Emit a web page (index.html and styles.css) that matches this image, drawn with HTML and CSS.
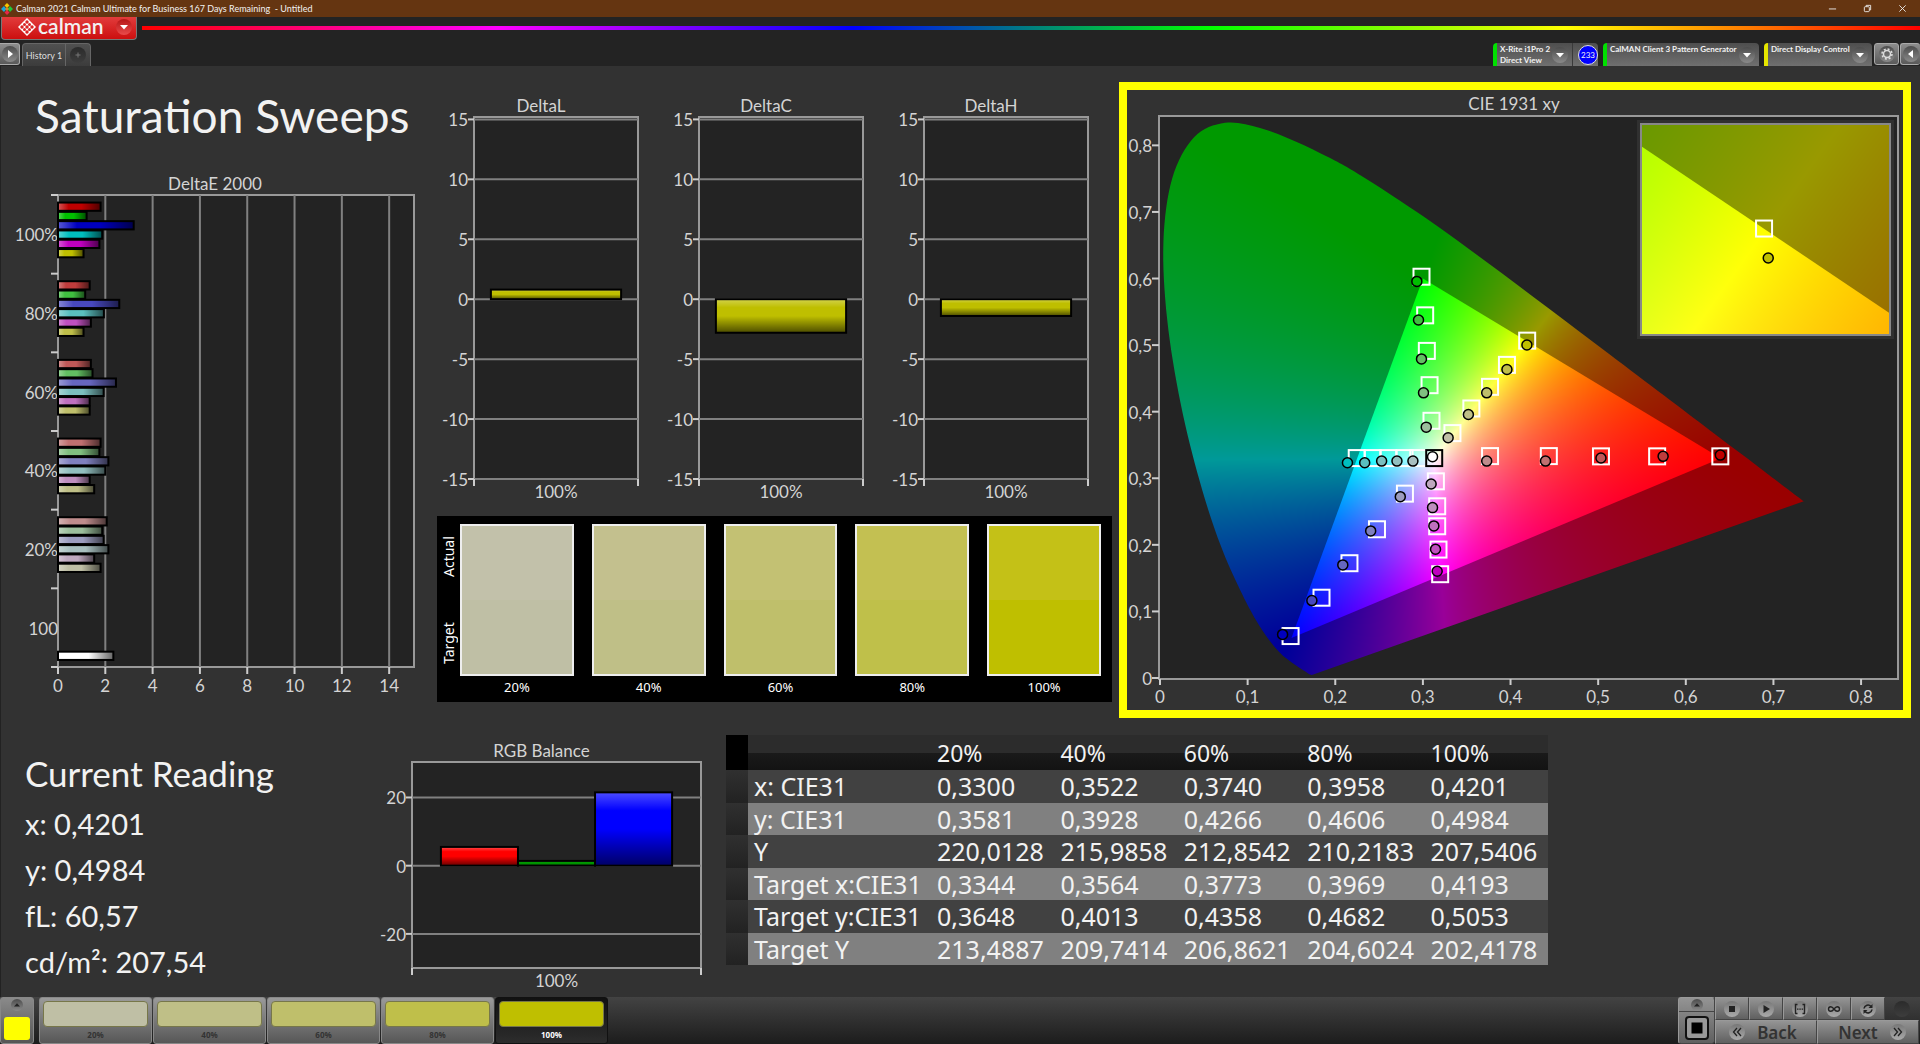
FILE: index.html
```
<!DOCTYPE html>
<html lang="en">
  <head>
    <meta charset="utf-8">
    <title>Calman 2021 - Untitled</title>
    <link rel="stylesheet" href="styles.css">
  </head>
  <body>
    <!-- shared gradients and symbols -->
    <svg class="defs" width="0" height="0" aria-hidden="true">
      <defs>
        <linearGradient id="shade-h" x1="0" y1="0" x2="1" y2="0">
          <stop offset="0" stop-color="#fff" stop-opacity="0.35" />
          <stop offset="0.25" stop-color="#fff" stop-opacity="0" />
          <stop offset="0.55" stop-color="#000" stop-opacity="0" />
          <stop offset="1" stop-color="#000" stop-opacity="0.6" />
        </linearGradient>
        <linearGradient id="shade-v" x1="0" y1="0" x2="0" y2="1">
          <stop offset="0" stop-color="#fff" stop-opacity="0.3" />
          <stop offset="0.25" stop-color="#fff" stop-opacity="0" />
          <stop offset="0.5" stop-color="#000" stop-opacity="0" />
          <stop offset="1" stop-color="#000" stop-opacity="0.6" />
        </linearGradient>
        <symbol id="arrow-down" viewBox="0 0 16 16"><path d="M4 6h8l-4 4.500z" fill="#fff" /></symbol>
        <symbol id="arrow-up" viewBox="0 0 16 16"><path d="M4 10h8L8 5.500z" fill="#222" /></symbol>
      </defs>
    </svg>

    <header class="titlebar">
      <svg class="app-icon" viewBox="0 0 12 12">
        <path d="M6 0l2.500 2.500L6 5 3.500 2.500z" fill="#f7c600" />
        <path d="M3 3l2.500 3L3 9 0 6z" fill="#18a8e0" />
        <path d="M9 3l3 3-3 3-2.500-3z" fill="#1fc83c" />
        <path d="M6 7l2.500 2.500L6 12 3.500 9.500z" fill="#e8264a" />
        <path d="M6 4l2 2-2 2-2-2z" fill="#d8862a" />
      </svg>
      <span class="window-title">Calman 2021 Calman Ultimate for Business 167 Days Remaining &nbsp;- Untitled</span>
      <button class="win-btn" aria-label="Minimize"><svg viewBox="0 0 10 10"><path d="M1 5.500h8" /></svg></button>
      <button class="win-btn" aria-label="Restore"><svg viewBox="0 0 10 10"><rect x="1.500" y="3" width="5.500" height="5.500" rx="1" /><path d="M3.500 3V1.500h5v5H7" /></svg></button>
      <button class="win-btn" aria-label="Close"><svg viewBox="0 0 10 10"><path d="M1.500 1.500l7 7M8.500 1.500l-7 7" /></svg></button>
    </header>

    <div class="brandbar">
      <button class="brand">
        <svg class="brand-mark" viewBox="0 0 18 18">
          <path d="M9 0l9 9-9 9-9-9z" fill="#fff" />
          <g fill="#d92323">
            <circle cx="9" cy="4" r="1.700" /><circle cx="6.500" cy="6.500" r="1.500" /><circle cx="11.500" cy="6.500" r="1.500" />
            <circle cx="4" cy="9" r="1.700" /><circle cx="9" cy="9" r="1.700" /><circle cx="14" cy="9" r="1.700" />
            <circle cx="6.500" cy="11.500" r="1.500" /><circle cx="11.500" cy="11.500" r="1.500" /><circle cx="9" cy="14" r="1.700" />
          </g>
        </svg>
        <span class="brand-name">calman</span>
        <svg class="knob knob-red"><use href="#arrow-down" /></svg>
      </button>
      <div class="rainbow"></div>
    </div>

    <nav class="tabbar">
      <button class="side-btn side-left" aria-label="Expand"><svg class="knob" viewBox="0 0 16 16"><path d="M6 4l5 4-5 4z" fill="#fff" /></svg></button>
      <div class="tabs">
        <button class="tab">History 1</button>
        <button class="tab tab-add" aria-label="Add tab"><svg class="knob knob-dark" viewBox="0 0 16 16"><path d="M8 5.500v5M5.500 8h5" stroke="#777" fill="none" /></svg></button>
      </div>
      <div class="meters">
        <div class="meter meter-green">
          <button class="meter-btn meter-probe"><span>X-Rite i1Pro 2<br>Direct View</span><svg class="knob"><use href="#arrow-down" /></svg></button>
          <span class="count">233</span>
        </div>
        <div class="meter meter-green">
          <button class="meter-btn meter-pattern"><span>CalMAN Client 3 Pattern Generator</span><svg class="knob"><use href="#arrow-down" /></svg></button>
        </div>
        <div class="meter meter-yellow">
          <button class="meter-btn meter-display"><span>Direct Display Control</span><svg class="knob"><use href="#arrow-down" /></svg></button>
        </div>
        <button class="side-btn" aria-label="Settings">
          <svg class="knob" viewBox="0 0 16 16"><circle cx="8" cy="8" r="3.500" fill="none" stroke="#ddd" stroke-width="1.500" /><circle cx="8" cy="8" r="5" fill="none" stroke="#ddd" stroke-width="1.500" stroke-dasharray="2 1.930" /></svg>
        </button>
        <button class="side-btn side-right" aria-label="Collapse"><svg class="knob" viewBox="0 0 16 16"><path d="M10 4L5 8l5 4z" fill="#fff" /></svg></button>
      </div>
    </nav>

    <main class="board">
      <section class="top">
        <div class="sweeps">
          <h1>Saturation Sweeps</h1>
          <figure class="chart chart-de">
            <figcaption>DeltaE 2000</figcaption>
            <svg class="plot" id="deltaE"></svg>
          </figure>
        </div>

        <div class="middle">
          <div class="deltas">
            <figure class="chart chart-delta">
              <figcaption>DeltaL</figcaption>
              <svg class="plot" id="deltaL"></svg>
            </figure>
            <figure class="chart chart-delta">
              <figcaption>DeltaC</figcaption>
              <svg class="plot" id="deltaC"></svg>
            </figure>
            <figure class="chart chart-delta">
              <figcaption>DeltaH</figcaption>
              <svg class="plot" id="deltaH"></svg>
            </figure>
          </div>
          <div class="swatches">
            <div class="swatch-side"><span>Target</span><span>Actual</span></div>
            <div class="swatch"><div class="pair pair-20"></div><span>20%</span></div>
            <div class="swatch"><div class="pair pair-40"></div><span>40%</span></div>
            <div class="swatch"><div class="pair pair-60"></div><span>60%</span></div>
            <div class="swatch"><div class="pair pair-80"></div><span>80%</span></div>
            <div class="swatch"><div class="pair pair-100"></div><span>100%</span></div>
          </div>
        </div>

        <figure class="chart chart-cie">
          <figcaption>CIE 1931 xy</figcaption>
          <div class="cie-plot">
            <canvas id="locus"></canvas>
            <svg class="cie-layer" id="cie"></svg>
            <div class="inset">
              <canvas id="inset-locus"></canvas>
              <svg class="cie-layer" id="cie-inset"></svg>
            </div>
          </div>
        </figure>
      </section>

      <section class="bottom">
        <div class="reading">
          <h2>Current Reading</h2>
          <p>x: 0,4201</p>
          <p>y: 0,4984</p>
          <p>fL: 60,57</p>
          <p>cd/m²: 207,54</p>
        </div>
        <figure class="chart chart-rgb">
          <figcaption>RGB Balance</figcaption>
          <svg class="plot" id="rgb"></svg>
        </figure>
        <div class="data">
          <table>
            <thead>
              <tr><td class="gutter"></td><th class="label"></th><th>20%</th><th>40%</th><th>60%</th><th>80%</th><th>100%</th></tr>
            </thead>
            <tbody>
              <tr><td class="gutter"></td><th class="label">x: CIE31</th><td>0,3300</td><td>0,3522</td><td>0,3740</td><td>0,3958</td><td>0,4201</td></tr>
              <tr><td class="gutter"></td><th class="label">y: CIE31</th><td>0,3581</td><td>0,3928</td><td>0,4266</td><td>0,4606</td><td>0,4984</td></tr>
              <tr><td class="gutter"></td><th class="label">Y</th><td>220,0128</td><td>215,9858</td><td>212,8542</td><td>210,2183</td><td>207,5406</td></tr>
              <tr><td class="gutter"></td><th class="label">Target x:CIE31</th><td>0,3344</td><td>0,3564</td><td>0,3773</td><td>0,3969</td><td>0,4193</td></tr>
              <tr><td class="gutter"></td><th class="label">Target y:CIE31</th><td>0,3648</td><td>0,4013</td><td>0,4358</td><td>0,4682</td><td>0,5053</td></tr>
              <tr><td class="gutter"></td><th class="label">Target Y</th><td>213,4887</td><td>209,7414</td><td>206,8621</td><td>204,6024</td><td>202,4178</td></tr>
            </tbody>
          </table>
        </div>
      </section>
    </main>

    <footer class="dock">
      <button class="current" aria-label="Current color">
        <svg class="knob knob-small"><use href="#arrow-up" /></svg>
        <span class="current-color"></span>
      </button>
      <div class="levels">
        <button class="level"><span class="chip chip-20"></span>20%</button>
        <button class="level"><span class="chip chip-40"></span>40%</button>
        <button class="level"><span class="chip chip-60"></span>60%</button>
        <button class="level"><span class="chip chip-80"></span>80%</button>
        <button class="level level-active"><span class="chip chip-100"></span>100%</button>
      </div>
      <div class="transport">
        <div class="source">
          <button class="source-up" aria-label="Show source"><svg class="knob knob-small"><use href="#arrow-up" /></svg></button>
          <button class="source-stop" aria-label="Stop source"><svg viewBox="0 0 24 24"><rect x="1" y="1" width="22" height="22" rx="3" fill="#999" stroke="#111" stroke-width="2" /><rect x="6.500" y="6.500" width="11" height="11" /></svg></button>
        </div>
        <div class="controls">
          <button aria-label="Stop"><svg class="knob" viewBox="0 0 16 16"><rect x="5" y="5" width="6" height="6" fill="#222" /></svg></button>
          <button aria-label="Play"><svg class="knob" viewBox="0 0 16 16"><path d="M5.500 4l6.500 4-6.500 4z" fill="#222" /></svg></button>
          <button aria-label="Read series"><svg class="knob" viewBox="0 0 16 16"><path d="M5.500 3.500h-2v9h2M10.500 3.500h2v9h-2" fill="none" stroke="#222" stroke-width="1.400" /><path d="M5 7.500h1.500v1.300H5zM7.300 7.500h1.500v1.300H7.300zM9.600 7.500h1.500v1.300H9.600z" fill="#222" /></svg></button>
          <button aria-label="Continuous"><svg class="knob" viewBox="0 0 16 16"><path d="M8 8C6.500 6 5.800 5.700 4.800 5.700a2.300 2.300 0 000 4.600C5.800 10.300 6.500 10 8 8s2.200-2.300 3.200-2.300a2.300 2.300 0 010 4.600C10.200 10.300 9.500 10 8 8z" fill="none" stroke="#222" stroke-width="1.400" /></svg></button>
          <button aria-label="Refresh"><svg class="knob" viewBox="0 0 16 16"><path d="M4 7.500a4 4 0 017-2M12 8.500a4 4 0 01-7 2" fill="none" stroke="#222" stroke-width="1.600" /><path d="M12.500 3v4h-4zM3.500 13V9h4z" fill="#222" /></svg></button>
          <span class="blank"><svg class="knob knob-dark"></svg></span>
          <button class="nav-btn"><svg class="knob" viewBox="0 0 16 16"><path d="M8 4L4.500 8 8 12M12 4L8.500 8l3.500 4" fill="none" stroke="#222" stroke-width="1.300" /></svg>Back</button>
          <button class="nav-btn nav-next">Next<svg class="knob" viewBox="0 0 16 16"><path d="M4 4l3.500 4L4 12M8 4l3.500 4L8 12" fill="none" stroke="#222" stroke-width="1.300" /></svg></button>
        </div>
      </div>
    </footer>

    <script src="charts.js"></script>
  </body>
</html>
```
FILE: styles.css
```
* {
  box-sizing: border-box;
}
html,
body {
  margin: 0;
  height: 100%;
}
body {
  display: flex;
  flex-direction: column;
  min-height: 100vh;
  background-color: #232323;
  color: #f2f2f2;
  font-family: Lato, "Noto Sans", sans-serif;
}
button {
  margin: 0;
  padding: 0;
  border: none;
  background: none;
  color: inherit;
  font: inherit;
}
figure,
h1,
h2,
p {
  margin: 0;
  font-weight: normal;
}
.defs {
  position: absolute;
}

/* round grey button faces */
.knob {
  flex: none;
  width: 16px;
  height: 16px;
  border-radius: 50%;
  background: linear-gradient(#4c4c4c, #8a8a8a);
}
.knob-red {
  background: linear-gradient(#b51616, #ea4a4a);
}
.knob-dark {
  background: linear-gradient(#2b2b2b, #3d3d3d);
}
.knob-small {
  width: 12px;
  height: 12px;
}

/* title bar */
.titlebar {
  display: flex;
  align-items: center;
  height: 17px;
  background-color: #653511;
  font-size: 9px;
}
.app-icon {
  width: 12px;
  height: 12px;
  margin: 0 3px 0 1px;
}
.window-title {
  flex: 1;
}
.win-btn {
  display: flex;
  justify-content: center;
  width: 35px;
}
.win-btn svg {
  width: 9px;
  height: 9px;
  fill: none;
  stroke: #eee;
}

/* brand and rainbow line */
.brandbar {
  display: flex;
  height: 26px;
}
.brand {
  display: flex;
  align-items: center;
  width: 136px;
  height: 23px;
  margin: 0 5px 0 1px;
  padding: 0 4px 2px 16px;
  border: 1px solid #777;
  border-top: none;
  border-radius: 0 0 4px 4px;
  background: linear-gradient(#e23c3c, #cc0f0f);
}
.brand-mark {
  width: 18px;
  height: 18px;
}
.brand-name {
  flex: 1;
  padding: 0 0 3px 2px;
  text-align: left;
  font-size: 21px;
  line-height: 18px;
  font-weight: 600;
}
.rainbow {
  flex: 1;
  height: 4px;
  margin-top: 9px;
  background: linear-gradient(to right, #f00, #f0f 20%, #00f 40%, #0f0 60%, #ff0 80%, #f00);
}

/* tabs and meters */
.tabbar {
  display: flex;
  height: 23px;
  font-size: 9px;
}
.side-btn {
  display: flex;
  align-items: center;
  justify-content: center;
  width: 25px;
  height: 22px;
  border: 1px solid #aaa;
  border-radius: 3px;
  background: linear-gradient(#8d8d8d, #5a5a5a);
}
.side-left {
  width: 20px;
  margin-right: 2px;
  border-left: none;
  border-radius: 0 3px 3px 0;
}
.side-right {
  width: 20px;
  border-right: none;
}
.tabs {
  display: flex;
  flex: 1;
}
.tab {
  display: flex;
  align-items: center;
  justify-content: center;
  width: 44px;
  border: 1px solid #666;
  border-bottom: none;
  border-radius: 4px 0 0 0;
  background: linear-gradient(#505050, #3c3c3c);
  color: #ddd;
}
.tab-add {
  width: 25px;
  border-left: none;
  border-radius: 0 4px 0 0;
}
.meters {
  display: flex;
  gap: 1px;
}
.meter {
  display: flex;
  margin-right: 4px;
  border-left: 4px solid;
  border-radius: 4px 4px 0 0;
  background: linear-gradient(#4e4e4e, #707070);
}
.meter-green {
  border-color: #00e000;
}
.meter-yellow {
  border-color: #e6e600;
  margin-right: 1px;
}
.meter-btn {
  display: flex;
  align-items: center;
  padding: 1px 4px 0 3px;
  text-align: left;
  font-size: 8px;
  line-height: 11px;
  font-weight: bold;
}
.meter-btn span {
  flex: 1;
  align-self: flex-start;
}
.meter-probe {
  width: 76px;
  border-right: 1px solid #3a3a3a;
}
.meter-pattern {
  width: 152px;
}
.meter-display {
  width: 104px;
}
.count {
  align-self: center;
  width: 20px;
  height: 20px;
  margin: 0 0 0 5px;
  border: 1px solid #ddd;
  border-radius: 50%;
  background-color: #00f;
  font-size: 8px;
  line-height: 18px;
  text-align: center;
}

/* board */
.board {
  display: flex;
  flex: 1;
  flex-direction: column;
  min-height: 0;
  border-left: 1px solid #222;
  background-color: #323232;
}
.top {
  display: grid;
  grid-template-columns: 429fr 688fr 802fr;
  flex: 655;
  min-height: 0;
}
.bottom {
  display: grid;
  grid-template-columns: 340fr 385fr 1194fr;
  flex: 276;
  min-height: 0;
}

/* charts */
.chart {
  display: flex;
  flex-direction: column;
  min-width: 0;
  min-height: 0;
  color: #d4d4d4;
  font-size: 17px;
  line-height: 20px;
}
.chart figcaption {
  padding-bottom: 1px;
  text-align: center;
}
.plot {
  flex: 1;
  width: 100%;
  min-height: 0;
  overflow: visible;
  font-size: 17px;
}
.plot text,
.cie-layer text {
  fill: #d4d4d4;
}
.area {
  fill: #232323;
  stroke: #999;
  stroke-width: 2;
}
.grid {
  stroke: #808080;
  stroke-width: 2;
}
.tick {
  stroke: #ccc;
  stroke-width: 2;
}
.bar {
  stroke: #000;
  stroke-width: 2;
}
.sweeps {
  display: flex;
  flex-direction: column;
  min-height: 0;
  padding-top: 20px;
}
.sweeps h1 {
  padding-left: 34px;
  font-size: 46px;
  line-height: 60px;
}
.chart-de {
  flex: 1;
  padding: 28px 16px 54px 57px;
}
.chart-de figcaption {
  padding-right: 42px;
}
.middle {
  display: flex;
  flex-direction: column;
  min-height: 0;
  padding: 30px 6px 19px 7px;
}
.deltas {
  display: grid;
  grid-template-columns: repeat(3, 1fr);
  flex: 1;
  min-height: 0;
}
.chart-delta {
  padding: 0 24px 37px 37px;
}
.chart-delta figcaption {
  padding-right: 30px;
}

/* actual / target swatches */
.swatches {
  display: flex;
  gap: 18px;
  height: 186px;
  padding: 8px 11px 4px 0;
  background-color: #000;
  color: #fff;
  font-family: "Noto Sans", sans-serif;
  font-size: 13px;
}
.swatch-side {
  display: flex;
  justify-content: space-between;
  width: 23px;
  height: 152px;
  margin-right: -18px;
  padding: 12px 0;
  writing-mode: vertical-rl;
  transform: rotate(180deg);
  font-size: 14px;
  line-height: 23px;
}
.swatch {
  flex: 1;
  text-align: center;
  line-height: 23px;
}
.pair {
  height: 152px;
  border: 2px solid #eee;
}
.pair-20 {
  background: linear-gradient(#c2c1aa 50%, #bfbfa5 50%);
}
.pair-40 {
  background: linear-gradient(#c3c08e 50%, #bfbf87 50%);
}
.pair-60 {
  background: linear-gradient(#c3c173 50%, #bfbf6b 50%);
}
.pair-80 {
  background: linear-gradient(#c3c052 50%, #bfc04a 50%);
}
.pair-100 {
  background: linear-gradient(#c4c117 50%, #bfbf00 50%);
}

/* chromaticity diagram */
.chart-cie {
  margin: 16px 9px 3px 1px;
  padding: 4px 4px 30px 31px;
  border: 8px solid #ff0;
}
.chart-cie figcaption {
  padding-right: 29px;
}
.cie-plot {
  position: relative;
  flex: 1;
  min-height: 0;
  border: 2px solid #999;
  background-color: #232323;
}
.cie-plot canvas {
  display: block;
  position: absolute;
  width: 100%;
  height: 100%;
}
.cie-layer {
  position: absolute;
  width: 100%;
  height: 100%;
  overflow: visible;
  font-size: 17px;
}
.inset {
  position: absolute;
  top: 6px;
  right: 6px;
  width: 34%;
  height: 38%;
  border: 2px solid #888;
  outline: 3px solid #303030;
}
.target {
  fill: none;
  stroke: #fff;
  stroke-width: 2;
}
.target-white {
  stroke: #000;
}
.measured {
  stroke: #000;
  stroke-width: 1.5;
}

/* readings */
.reading {
  padding: 29px 0 0 24px;
  font-size: 29px;
  line-height: 46px;
}
.reading h2 {
  padding-bottom: 5px;
  font-size: 35px;
}
.chart-rgb {
  padding: 20px 25px 29px 71px;
}
.chart-rgb figcaption {
  padding-right: 30px;
}

/* data table */
.data {
  padding-top: 14px;
}
table {
  width: 822px;
  height: 230px;
  table-layout: fixed;
  border-collapse: collapse;
  font-family: "Noto Sans", sans-serif;
  font-size: 25px;
  line-height: 32px;
}
th,
td {
  padding: 0 0 0 6px;
  font-weight: normal;
  text-align: left;
}
thead tr {
  height: 35px;
  background: linear-gradient(#2c2c2c, #2c2c2c 50%, #1a1a1a 50%, #131313);
}
thead th {
  font-size: 23px;
}
tbody tr {
  background-color: #414141;
}
tbody tr:nth-child(even) {
  background-color: #808080;
}
.gutter {
  width: 22px;
  padding: 0;
  background: linear-gradient(#303030, #222);
}
thead .gutter {
  background: #000;
}
.label {
  width: 183px;
}

/* bottom dock */
.dock {
  display: flex;
  height: 47px;
  background: linear-gradient(#434343, #1c1c1c);
  font-family: "Noto Sans", sans-serif;
}
.current {
  display: flex;
  flex-direction: column;
  align-items: center;
  justify-content: space-between;
  width: 34px;
  margin-right: 5px;
  padding: 1px 0 3px;
  border: 1px solid #888;
  border-radius: 3px;
  background: linear-gradient(#8a8a8a, #555);
}
.current-color {
  width: 26px;
  height: 23px;
  border-radius: 3px;
  background-color: #ff0;
}
.levels {
  display: flex;
  flex: 1;
  gap: 1px;
}
.level {
  display: flex;
  flex-direction: column;
  width: 113px;
  padding: 3px 3px 0;
  border: 1px solid #888;
  border-radius: 3px;
  background: linear-gradient(#9a9a9a, #575757);
  color: #333;
  font-size: 8px;
  line-height: 16px;
  font-weight: bold;
  text-align: center;
}
.level-active {
  border-color: #111;
  background: linear-gradient(#111, #2d2d2d);
  color: #fff;
}
.chip {
  height: 28px;
  border: 1px solid #77774a;
  border-radius: 4px;
}
.chip-20 {
  background-color: #bfbfa5;
}
.chip-40 {
  background-color: #bfbf87;
}
.chip-60 {
  background-color: #bfbf6b;
}
.chip-80 {
  background-color: #bfbf4a;
}
.chip-100 {
  background-color: #bfbf00;
}
.transport {
  display: flex;
}
.source,
.controls button {
  border: 1px solid #999;
  border-right-color: #444;
  border-bottom-color: #444;
  background: linear-gradient(#949494, #606060);
}
.source {
  display: flex;
  flex-direction: column;
  width: 37px;
  border-radius: 3px;
}
.source button {
  display: flex;
  align-items: center;
  justify-content: center;
}
.source-up {
  height: 14px;
  border-bottom: 1px solid #444;
}
.source-stop {
  flex: 1;
}
.source-stop svg {
  width: 24px;
  height: 24px;
}
.controls {
  display: grid;
  grid-template-columns: repeat(6, 34px);
  grid-template-rows: 23px 24px;
  width: 205px;
}
.controls button,
.blank {
  display: flex;
  align-items: center;
  justify-content: center;
}
.controls .knob:not(.knob-dark) {
  background: linear-gradient(#777, #aaa);
}
.controls .nav-btn {
  grid-column: span 3;
  gap: 12px;
  padding-right: 6px;
  color: #333;
  font-size: 17px;
  font-weight: 600;
}
.controls .nav-next {
  padding: 0 0 0 8px;
}
```
FILE: charts.js
```
const SVG = "http://www.w3.org/2000/svg";

function add(parent, name, attrs, text) {
  const node = document.createElementNS(SVG, name);
  for (const key in attrs) node.setAttribute(key, attrs[key]);
  if (text !== undefined) node.textContent = text;
  parent.appendChild(node);
  return node;
}

const pct = (v) => v * 100 + "%";

function addArea(svg) {
  add(svg, "rect", { class: "area", width: "100%", height: "100%" });
}

// anchors children at a percentage point so they can use pixel offsets
function anchor(svg, x, y) {
  return add(svg, "svg", { x: pct(x), y: pct(y), width: 1, height: 1, overflow: "visible" });
}

function addBar(svg, x, y, w, h, fill, shade) {
  const box = { x: pct(x), y: pct(y), width: pct(w), height: pct(h) };
  add(svg, "rect", { ...box, fill });
  add(svg, "rect", { ...box, fill: `url(#${shade})`, class: "bar" });
}

// DeltaE 2000, horizontal bars
const groups = [
  { label: "100%", values: [1.8, 1.21, 3.2, 1.87, 1.75, 1.08], colors: ["#bf0000", "#00bf00", "#0000bf", "#00bfbf", "#bf00bf", "#bfbf00"] },
  { label: "80%", values: [1.34, 1.15, 2.59, 1.94, 1.39, 1.08], colors: ["#bf3c3c", "#40bf40", "#4848bf", "#5abfbf", "#bf50bf", "#bfbf4a"] },
  { label: "60%", values: [1.39, 1.46, 2.45, 1.93, 1.34, 1.34], colors: ["#bf5858", "#62bf62", "#6666bf", "#7bbfbf", "#bf70bf", "#bfbf6b"] },
  { label: "40%", values: [1.8, 1.75, 2.13, 2.0, 1.34, 1.53], colors: ["#bf7070", "#80bf80", "#8080bf", "#92bfbf", "#bf8ebf", "#bfbf87"] },
  { label: "20%", values: [2.06, 1.87, 1.93, 2.13, 1.53, 1.8], colors: ["#bf8c8c", "#9cbf9c", "#9c9cbf", "#a8bfbf", "#bfa8bf", "#bfbfa5"] },
  { label: "100", values: [0, 0, 0, 0, 0, 0, 2.34], colors: ["", "", "", "", "", "", "#ffffff"] },
];

function drawDeltaE() {
  const svg = document.querySelector("#deltaE");
  const max = 15.05;
  addArea(svg);
  for (let v = 0; v < max; v += 2) {
    if (v) add(svg, "line", { class: "grid", x1: pct(v / max), x2: pct(v / max), y1: 0, y2: "100%" });
    const g = anchor(svg, v / max, 1);
    add(g, "line", { class: "tick", y1: 0, y2: 7 });
    add(g, "text", { y: 25, "text-anchor": "middle" }, v);
  }
  groups.forEach((group, i) => {
    const top = i / groups.length;
    add(anchor(svg, 0, top), "line", { class: "tick", x1: -7, x2: 0 });
    add(anchor(svg, 0, top + 0.5 / groups.length), "text", { x: 0, y: 7, "text-anchor": "end" }, group.label);
    group.values.forEach((v, n) => {
      if (v) addBar(svg, 0, top + 0.016 + n * 0.0197, v / max, 0.0175, group.colors[n], "shade-h");
    });
  });
  add(anchor(svg, 0, 1), "line", { class: "tick", x1: -7, x2: 0 });
}

// vertical bar charts
function drawColumns(id, min, max, step, bars, margin) {
  const svg = document.querySelector(id);
  const y = (v) => (max - v) / (max - min);
  addArea(svg);
  for (let v = Math.ceil(min / step) * step; v <= max; v += step) {
    add(svg, "line", { class: "grid", x1: 0, x2: "100%", y1: pct(y(v)), y2: pct(y(v)) });
    const g = anchor(svg, 0, y(v));
    add(g, "line", { class: "tick", x1: -6, x2: 0 });
    add(g, "text", { x: -6, y: 7, "text-anchor": "end" }, v);
  }
  const w = (1 - margin * 2) / bars.length;
  bars.forEach((bar, i) => {
    const top = Math.max(bar.value, 0);
    addBar(svg, margin + i * w, y(top), w, Math.abs(bar.value) / (max - min), bar.color, "shade-v");
  });
  add(anchor(svg, 0, 1), "line", { class: "tick", y1: 0, y2: 7 });
  add(anchor(svg, 1, 1), "line", { class: "tick", y1: 0, y2: 7 });
  add(anchor(svg, 0.5, 1), "text", { y: 19, "text-anchor": "middle" }, "100%");
}

// CIE 1931 spectral locus
const locus = [
  [0.1741, 0.005], [0.1714, 0.0051], [0.1644, 0.0109], [0.1566, 0.0177], [0.144, 0.0297],
  [0.1355, 0.0399], [0.1241, 0.0578], [0.1096, 0.0868], [0.0913, 0.1327], [0.0687, 0.2007],
  [0.0454, 0.295], [0.0235, 0.4127], [0.0082, 0.5384], [0.0039, 0.6548], [0.0139, 0.7502],
  [0.0389, 0.812], [0.0743, 0.8338], [0.1142, 0.8262], [0.1547, 0.8059], [0.1929, 0.7816],
  [0.2296, 0.7543], [0.3016, 0.6923], [0.3731, 0.6245], [0.4441, 0.5547], [0.5125, 0.4866],
  [0.5752, 0.4242], [0.627, 0.3725], [0.6658, 0.334], [0.6915, 0.3083], [0.719, 0.2809],
  [0.7347, 0.2653],
];
const gamut = [[0.64, 0.33], [0.3, 0.6], [0.15, 0.06]];

// brightest linear RGB for a chromaticity, clamped to the gamut
function chromaToRgb(x, y) {
  const X = x / y;
  const Z = (1 - x - y) / y;
  const rgb = [
    3.2406 * X - 1.5372 - 0.4986 * Z,
    -0.9689 * X + 1.8758 + 0.0415 * Z,
    0.0557 * X - 0.204 + 1.057 * Z,
  ].map((c) => Math.max(c, 0));
  const peak = Math.max(...rgb);
  return rgb.map((c) => (c / peak) * 255);
}

function colorField(width, height, view, gain) {
  const field = document.createElement("canvas");
  field.width = width;
  field.height = height;
  const ctx = field.getContext("2d");
  const image = ctx.createImageData(width, height);
  for (let py = 0; py < height; py++) {
    const y = Math.max(view.y1 - ((py + 0.5) / height) * (view.y1 - view.y0), 0.0001);
    for (let px = 0; px < width; px++) {
      const x = view.x0 + ((px + 0.5) / width) * (view.x1 - view.x0);
      const rgb = chromaToRgb(x, y);
      const at = (py * width + px) * 4;
      for (let c = 0; c < 3; c++) image.data[at + c] = rgb[c] * gain;
      image.data[at + 3] = 255;
    }
  }
  ctx.putImageData(image, 0, 0);
  return field;
}

function drawChroma(id, view) {
  const canvas = document.querySelector(id);
  const width = (canvas.width = canvas.clientWidth);
  const height = (canvas.height = canvas.clientHeight);
  const ctx = canvas.getContext("2d");
  const map = ([x, y]) => [
    ((x - view.x0) / (view.x1 - view.x0)) * width,
    ((view.y1 - y) / (view.y1 - view.y0)) * height,
  ];

  // outside the gamut, dimmed
  const p = locus.map(map);
  ctx.save();
  ctx.beginPath();
  ctx.moveTo(...p[0]);
  for (let i = 0; i < p.length - 1; i++) {
    const a = p[Math.max(i - 1, 0)];
    const b = p[i];
    const c = p[i + 1];
    const d = p[Math.min(i + 2, p.length - 1)];
    ctx.bezierCurveTo(
      b[0] + (c[0] - a[0]) / 6, b[1] + (c[1] - a[1]) / 6,
      c[0] - (d[0] - b[0]) / 6, c[1] - (d[1] - b[1]) / 6,
      c[0], c[1]
    );
  }
  ctx.closePath();
  ctx.clip();
  ctx.drawImage(colorField(width, height, view, 0.6), 0, 0);
  ctx.restore();

  ctx.save();
  ctx.beginPath();
  gamut.map(map).forEach((pt) => ctx.lineTo(...pt));
  ctx.closePath();
  ctx.clip();
  ctx.drawImage(colorField(width, height, view, 1), 0, 0);
  ctx.restore();
}

// [target x, target y, measured x, measured y], 100% first
const sweeps = [
  [[0.6394, 0.3329, 0.6394, 0.3348], [0.5673, 0.3329, 0.5741, 0.3329], [0.5032, 0.3329, 0.5032, 0.3305], [0.4437, 0.3333, 0.4399, 0.3258], [0.3766, 0.3333, 0.3728, 0.3258]],
  [[0.2984, 0.6027, 0.2931, 0.5957], [0.3026, 0.5447, 0.295, 0.5377], [0.3045, 0.4913, 0.2984, 0.4793], [0.3076, 0.4398, 0.3007, 0.4283], [0.3098, 0.3863, 0.3038, 0.3768]],
  [[0.149, 0.063, 0.1399, 0.0655], [0.1843, 0.1206, 0.1733, 0.1163], [0.2162, 0.1724, 0.2086, 0.1699], [0.2476, 0.2234, 0.2404, 0.2209], [0.2795, 0.2769, 0.2742, 0.2724]],
  [[0.2245, 0.3303, 0.2139, 0.3233], [0.2427, 0.3303, 0.2336, 0.3233], [0.2605, 0.3303, 0.2529, 0.3258], [0.2791, 0.3303, 0.2704, 0.3258], [0.2947, 0.3303, 0.2886, 0.3258]],
  [[0.3197, 0.1559, 0.3163, 0.1604], [0.3178, 0.1929, 0.3144, 0.1934], [0.3163, 0.2279, 0.3125, 0.2284], [0.3163, 0.2579, 0.311, 0.2559], [0.3148, 0.2954, 0.3094, 0.2914]],
  [[0.419, 0.5067, 0.4187, 0.5002], [0.3959, 0.4703, 0.3959, 0.4633], [0.3766, 0.4373, 0.3728, 0.4283], [0.3553, 0.4048, 0.3519, 0.3958], [0.3337, 0.3678, 0.3288, 0.3608]],
];

function addTarget(svg, x, y, name) {
  add(anchor(svg, x, y), "rect", { class: name, x: -8, y: -8, width: 16, height: 16 });
}

function addMeasured(svg, x, y, fill) {
  add(anchor(svg, x, y), "circle", { class: "measured", r: 5, fill });
}

function drawCie() {
  const view = { x0: 0, x1: 0.841, y0: 0, y1: 0.8426 };
  const svg = document.querySelector("#cie");
  const sx = (x) => x / view.x1;
  const sy = (y) => 1 - y / view.y1;
  drawChroma("#locus", view);
  for (let i = 0; i <= 8; i++) {
    const text = i ? "0," + i : "0";
    const gx = anchor(svg, sx(i / 10), 1);
    add(gx, "line", { class: "tick", y1: 1, y2: 7 });
    add(gx, "text", { y: 25, "text-anchor": "middle" }, text);
    const gy = anchor(svg, 0, sy(i / 10));
    add(gy, "line", { class: "tick", x1: -8, x2: -1 });
    add(gy, "text", { x: -8, y: 7, "text-anchor": "end" }, text);
  }
  sweeps.forEach((sweep) => sweep.forEach((p) => addTarget(svg, sx(p[0]), sy(p[1]), "target")));
  addTarget(svg, sx(0.3129), sy(0.3303), "target target-white");
  sweeps.forEach((sweep, s) => {
    sweep.forEach((p, n) => addMeasured(svg, sx(p[2]), sy(p[3]), groups[n].colors[s]));
  });
  addMeasured(svg, sx(0.311), sy(0.3323), "#fff");

  const zoom = { x0: 0.3943, x1: 0.4443, y0: 0.4803, y1: 0.5303 };
  drawChroma("#inset-locus", zoom);
  const inset = document.querySelector("#cie-inset");
  addTarget(inset, 0.495, 0.495, "target");
  addMeasured(inset, 0.512, 0.636, "#bfbf00");
}

drawDeltaE();
drawColumns("#deltaL", -15, 15.2, 5, [{ value: 0.8, color: "#bfbf00" }], 0.103);
drawColumns("#deltaC", -15, 15.2, 5, [{ value: -2.8, color: "#bfbf00" }], 0.103);
drawColumns("#deltaH", -15, 15.2, 5, [{ value: -1.4, color: "#bfbf00" }], 0.103);
drawColumns("#rgb", -30, 30.4, 20, [
  { value: 5.5, color: "#ff0000" },
  { value: 1.4, color: "#009900" },
  { value: 21.5, color: "#0000ff" },
], 0.1);
drawCie();
```
